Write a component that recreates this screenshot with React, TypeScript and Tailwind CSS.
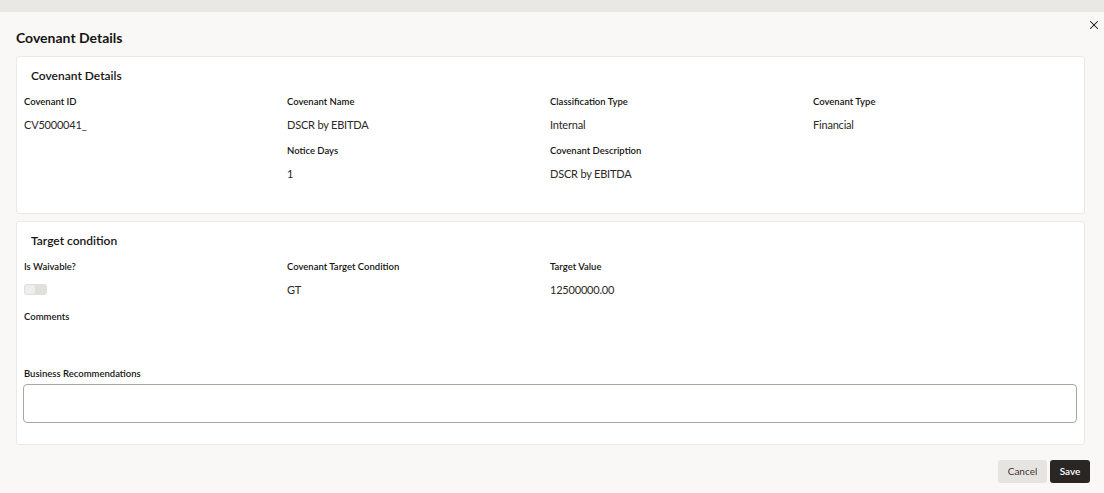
import { X } from "lucide-react"

const font = { fontFamily: "Lato, 'Noto Sans', sans-serif" }

function Field({ label, value, children }: { label: string; value?: string; children?: React.ReactNode }) {
  return (
    <div className="flex flex-col">
      <span className="h-[14px] text-[9.5px] leading-[14px] font-semibold text-[#161513]">{label}</span>
      <div className="mt-[8px] h-[16px] text-[11px] tracking-[-0.2px] leading-[16px] text-[#2b2926]">
        {children ?? value}
      </div>
    </div>
  )
}

export default function App() {
  return (
    <div style={font} className="flex flex-col h-[493px] w-[1104px] bg-[#f9f8f6] overflow-hidden">
      <div className="h-[12px] shrink-0 bg-[#e9e8e5]" />
      <div className="relative flex-1 flex flex-col min-h-0">
        <button className="absolute right-[3px] top-[6px] text-[#161513]">
          <X size={14} strokeWidth={1.8} />
        </button>
        <h1 className="pl-[16px] pt-[18px] h-[44px] text-[14px] leading-[16px] font-bold text-[#161513]">Covenant Details</h1>

        <div className="flex-1 min-h-0 overflow-hidden pl-[16px] pr-[19px] flex flex-col gap-[7px]">
          <section className="bg-white border border-[#ebe9e6] rounded-[3px] px-[6px] pt-[9px] pb-[31px]">
            <h2 className="pl-[8px] h-[20px] text-[12px] leading-[20px] font-semibold text-[#161513]">Covenant Details</h2>
            <div className="pl-[1px] mt-[9px] grid grid-cols-[263px_263px_263px_263px] gap-y-[11px]">
              <Field label="Covenant ID" value="CV5000041_" />
              <Field label="Covenant Name" value="DSCR by EBITDA" />
              <Field label="Classification Type" value="Internal" />
              <Field label="Covenant Type" value="Financial" />
              <div />
              <Field label="Notice Days" value="1" />
              <Field label="Covenant Description" value="DSCR by EBITDA" />
            </div>
          </section>

          <section className="bg-white border border-[#ebe9e6] rounded-[3px] px-[6px] pt-[9px] pb-[21px]">
            <h2 className="pl-[8px] h-[20px] text-[12px] leading-[20px] font-semibold text-[#161513]">Target condition</h2>
            <div className="pl-[1px] mt-[9px] grid grid-cols-[263px_263px_263px_263px]">
              <Field label="Is Waivable?">
                <div className="relative mt-[2px] w-[23px] h-[11px] rounded-[3px] bg-[#e1dfdc]">
                  <div className="absolute left-[1px] top-[1px] w-[10px] h-[9px] rounded-[2px] bg-[#efeeec]" />
                </div>
              </Field>
              <Field label="Covenant Target Condition" value="GT" />
              <Field label="Target Value" value="12500000.00" />
            </div>
            <div className="pl-[1px] mt-[12px] h-[57px]">
              <span className="block h-[14px] text-[9.5px] leading-[14px] font-semibold text-[#161513]">Comments</span>
            </div>
            <span className="pl-[1px] block h-[14px] text-[9.5px] leading-[14px] font-semibold text-[#161513]">Business Recommendations</span>
            <textarea className="mt-[3px] block w-[1054px] h-[39px] resize-none rounded-[4px] border border-[#a9a6a2] bg-white outline-none" />
          </section>
        </div>

        <div className="h-[43px] shrink-0 flex items-start justify-end gap-[3px] pr-[14px] pt-[10px]">
          <button className="h-[23px] w-[49px] rounded-[3px] bg-[#e6e4e1] text-[10px] text-[#3a3733]">Cancel</button>
          <button className="h-[23px] w-[40px] rounded-[3px] bg-[#2a2624] text-[10px] font-semibold text-white">Save</button>
        </div>
      </div>
    </div>
  )
}
